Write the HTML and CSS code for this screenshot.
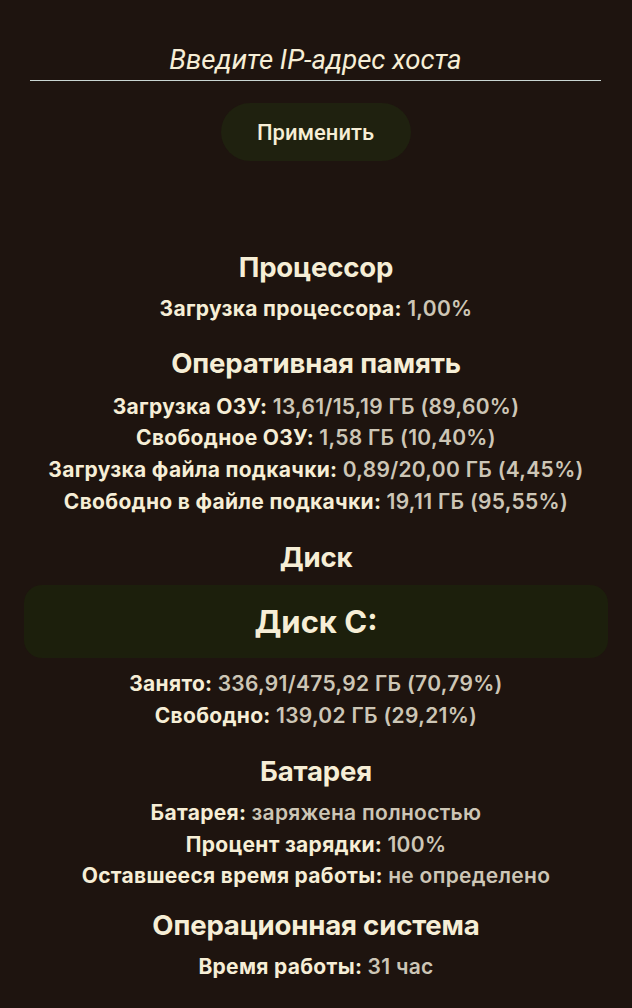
FILE: index.html
```html
<!DOCTYPE html>
<html lang="ru">
<head>
<meta charset="utf-8">
<link rel="stylesheet" href="styles.css">
</head>
<body>
<div class="page">
  <div class="host">
    <div class="host-input">Введите IP-адрес хоста</div>
    <button class="apply">Применить</button>
  </div>

  <section class="section s-cpu">
    <h2 class="title">Процессор</h2>
    <p class="row"><span class="lbl">Загрузка процессора:</span> <span class="val">1,00%</span></p>
  </section>

  <section class="section s-ram">
    <h2 class="title">Оперативная память</h2>
    <p class="row"><span class="lbl">Загрузка ОЗУ:</span> <span class="val">13,61/15,19 ГБ (89,60%)</span></p>
    <p class="row"><span class="lbl">Свободное ОЗУ:</span> <span class="val">1,58 ГБ (10,40%)</span></p>
    <p class="row"><span class="lbl">Загрузка файла подкачки:</span> <span class="val">0,89/20,00 ГБ (4,45%)</span></p>
    <p class="row"><span class="lbl">Свободно в файле подкачки:</span> <span class="val">19,11 ГБ (95,55%)</span></p>
  </section>

  <section class="section s-disk">
    <h2 class="title">Диск</h2>
    <div class="disk-card">Диск C:</div>
    <p class="row"><span class="lbl">Занято:</span> <span class="val">336,91/475,92 ГБ (70,79%)</span></p>
    <p class="row"><span class="lbl">Свободно:</span> <span class="val">139,02 ГБ (29,21%)</span></p>
  </section>

  <section class="section s-bat">
    <h2 class="title">Батарея</h2>
    <p class="row"><span class="lbl">Батарея:</span> <span class="val">заряжена полностью</span></p>
    <p class="row"><span class="lbl">Процент зарядки:</span> <span class="val">100%</span></p>
    <p class="row"><span class="lbl">Оставшееся время работы:</span> <span class="val">не определено</span></p>
  </section>

  <section class="section s-os">
    <h2 class="title">Операционная система</h2>
    <p class="row"><span class="lbl">Время работы:</span> <span class="val">31 час</span></p>
  </section>
</div>
</body>
</html>
```

FILE: styles.css
```css
html, body {
  margin: 0;
  padding: 0;
  background: #1e140f;
  height: 100%;
}
body {
  font-family: Inter, "Noto Sans", sans-serif;
  color: #f6eed6;
  overflow: hidden;
}
.page {
  display: flex;
  flex-direction: column;
  align-items: stretch;
}
.host {
  display: flex;
  flex-direction: column;
  align-items: center;
  padding: 43px 31px 0 30px;
}
.host-input {
  align-self: stretch;
  font-family: Roboto, sans-serif;
  font-style: italic;
  font-size: 27.6px;
  line-height: 34px;
  text-align: center;
  color: #f6eed6;
  padding-bottom: 3px;
  border-bottom: 1px solid #c9d6d2;
}
.apply {
  margin-top: 22px;
  width: 190px;
  height: 58px;
  border: none;
  border-radius: 29px;
  background: #1f210f;
  color: #f6eed6;
  font-family: Roboto, sans-serif;
  font-weight: 500;
  font-size: 22px;
  padding: 0;
}
.section {
  display: flex;
  flex-direction: column;
  align-items: center;
}
.s-cpu { margin-top: 91px; }
.s-ram { margin-top: 23px; }
.s-disk { margin-top: 24px; }
.s-bat { margin-top: 24.5px; }
.s-os { margin-top: 18px; }
.title {
  margin: 0 0 11px;
  font-size: 27.6px;
  line-height: 30px;
  font-weight: 700;
  letter-spacing: -0.2px;
}
.s-ram .title { margin-bottom: 13px; }
.s-disk .title { margin-bottom: 13.5px; }
.row {
  margin: 0;
  font-size: 21px;
  line-height: 31.7px;
  font-weight: 700;
  letter-spacing: 0.3px;
  white-space: nowrap;
}
.val {
  color: #cdc6b6;
  font-weight: 600;
}
.disk-card {
  align-self: stretch;
  margin: 0 24px 10px;
  height: 73px;
  border-radius: 18px;
  background: #1c1f0c;
  display: flex;
  align-items: center;
  justify-content: center;
  font-size: 31px;
  font-weight: 700;
}
```
